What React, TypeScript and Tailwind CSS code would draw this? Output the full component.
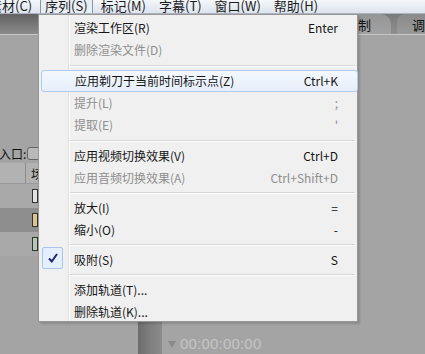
import { Fragment } from "react"

type Item = { label: string; key?: string; disabled?: boolean; active?: boolean; checked?: boolean }

const groups: Item[][] = [
  [
    { label: "渲染工作区(R)", key: "Enter" },
    { label: "删除渲染文件(D)", disabled: true },
  ],
  [
    { label: "应用剃刀于当前时间标示点(Z)", key: "Ctrl+K", active: true },
    { label: "提升(L)", key: ";", disabled: true },
    { label: "提取(E)", key: "'", disabled: true },
  ],
  [
    { label: "应用视频切换效果(V)", key: "Ctrl+D" },
    { label: "应用音频切换效果(A)", key: "Ctrl+Shift+D", disabled: true },
  ],
  [
    { label: "放大(I)", key: "=" },
    { label: "缩小(O)", key: "-" },
  ],
  [{ label: "吸附(S)", key: "S", checked: true }],
  [{ label: "添加轨道(T)..." }, { label: "删除轨道(K)..." }],
]

const menus = ["素材(C)", "序列(S)", "标记(M)", "字幕(T)", "窗口(W)", "帮助(H)"]

function MenuBar() {
  return (
    <div className="h-[14px] overflow-hidden bg-gradient-to-b from-[#f4f7fb] to-[#dde4ee] border-b border-[#aab3bf]">
      <div className="flex -mt-[4px] -ml-[16px] text-[13px] leading-[17px] text-[#1b1b1b]">
        {menus.map((m, i) => (
          <div
            key={m}
            className={`px-[4px] mr-[3px] ${i === 1 ? "border border-[#8e96a0] bg-[#e9eef5] rounded-[2px]" : "border border-transparent"}`}
          >
            {m}
          </div>
        ))}
      </div>
    </div>
  )
}

function Row({ item }: { item: Item }) {
  return (
    <div
      className={`relative flex items-center h-[22px] pr-[19px] ${
        item.active ? "mx-[2px] -mr-[1px] pl-[33px] rounded-[3px] border border-[#aecbee] bg-gradient-to-b from-[#f4f8fd] to-[#e6eefa]" : "pl-[35px]"
      } ${item.disabled ? "text-[#8e8e8e]" : "text-[#151515]"}`}
    >
      {item.checked && (
        <div className="absolute left-[3px] top-[-2px] w-[21px] h-[22px] rounded-[2px] border border-[#a9c4e8] bg-[#e5eefb] flex items-center justify-center">
          <svg width="12" height="12" viewBox="0 0 12 12">
            <path d="M2 6.5 L4.8 9.5 L10 2" fill="none" stroke="#1f2370" strokeWidth="2" />
          </svg>
        </div>
      )}
      <span className="flex-1">{item.label}</span>
      {item.key && <span>{item.key}</span>}
    </div>
  )
}

function Menu() {
  const seps = [9, 9, 8, 8, 8]
  return (
    <div className="absolute left-[38px] top-[14px] w-[320px] h-[308px] bg-[#f0f0f0] border border-[#979797] shadow-[2px_2px_2px_rgba(0,0,0,0.15)] pt-[2px] text-[12px]">
      <div className="absolute left-[29px] top-0 bottom-0 w-[2px] border-l border-[#e0e0e0] bg-white" />
      {groups.map((g, gi) => (
        <Fragment key={gi}>
          {gi > 0 && (
            <div className="flex items-center pl-[30px] pr-[2px]" style={{ height: seps[gi - 1] }}>
              <div className="flex-1 h-[2px] border-t border-[#d7d7d7] bg-white" />
            </div>
          )}
          {g.map((it) => (
            <Row key={it.label} item={it} />
          ))}
        </Fragment>
      ))}
    </div>
  )
}

export default function App() {
  return (
    <div
      className="relative w-[425px] h-[354px] overflow-hidden bg-[#a4a4a4]"
      style={{ fontFamily: '"Noto Sans CJK SC", "Noto Sans", sans-serif' }}
    >
      <MenuBar />
      {/* panel headers */}
      <div className="flex h-[21px] border-b border-[#c6c6c6]">
        <div className="w-[200px] bg-gradient-to-b from-[#626262] to-[#8c8c8c]" />
        <div className="flex-1 bg-gradient-to-b from-[#6f6f6f] to-[#8f8f8f]" />
        <div className="w-[68px] flex bg-gradient-to-b from-[#7a7a7a] to-[#8e8e8e]">
          <div className="w-[40px] rounded-tr-[10px] bg-gradient-to-b from-[#959595] to-[#a2a2a2] text-[13px] leading-[21px] text-[#111] pl-[1px]">
            制
          </div>
          <div className="flex-1 ml-[6px] rounded-tl-[8px] bg-gradient-to-b from-[#8a8a8a] to-[#9a9a9a] text-[13px] leading-[21px] text-[#111] pl-[15px]">
            调
          </div>
        </div>
      </div>
      {/* left project panel */}
      <div className="w-[140px] pt-[111px]">
        <div className="flex items-center h-[15px] text-[12px] text-[#111]">
          <span className="whitespace-nowrap -ml-[1px]">入口:</span>
          <div className="ml-[1px] w-[14px] h-[13px] rounded-[3px] border border-[#666] bg-[#b9b9b9]" />
        </div>
        <div className="mt-[2px] flex h-[21px] bg-[#b2b2b2] border-b border-[#999]">
          <div className="w-[26px] border-r border-[#8c8c8c]" />
          <span className="pl-[5px] text-[12px] leading-[21px] text-[#111]">场</span>
        </div>
        <div className="flex items-center h-[24px] bg-[#a9a9a9] pl-[32px]">
          <div className="w-[6px] h-[14px] border border-[#333] bg-[#e2e2e2]" />
        </div>
        <div className="flex items-center h-[24px] bg-[#8d8d8d] pl-[32px]">
          <div className="w-[6px] h-[14px] border border-[#333] bg-[#dcc38f]" />
        </div>
        <div className="flex items-center h-[24px] bg-[#a8a8a8] pl-[32px]">
          <div className="w-[6px] h-[14px] border border-[#333] bg-[#b8c5b2]" />
        </div>
      </div>
      {/* timeline strip */}
      <div className="absolute left-0 right-0 bottom-0 h-[32px] flex">
        <div className="w-[138px]" />
        <div className="w-[24px] bg-gradient-to-r from-[#6c6c6c] via-[#7e7e7e] to-[#8c8c8c]" />
        <div className="flex items-center pl-[6px] pt-[12px] gap-[4px]" style={{ fontFamily: '"Liberation Sans", sans-serif' }}>
          <svg width="8" height="7" viewBox="0 0 8 7">
            <path d="M0 0 L8 0 L4 7 Z" fill="#8a8a8a" />
          </svg>
          <span className="text-[15px] text-[#c4c4c4] tracking-[0.2px]">00:00:00:00</span>
        </div>
      </div>
      <Menu />
    </div>
  )
}
